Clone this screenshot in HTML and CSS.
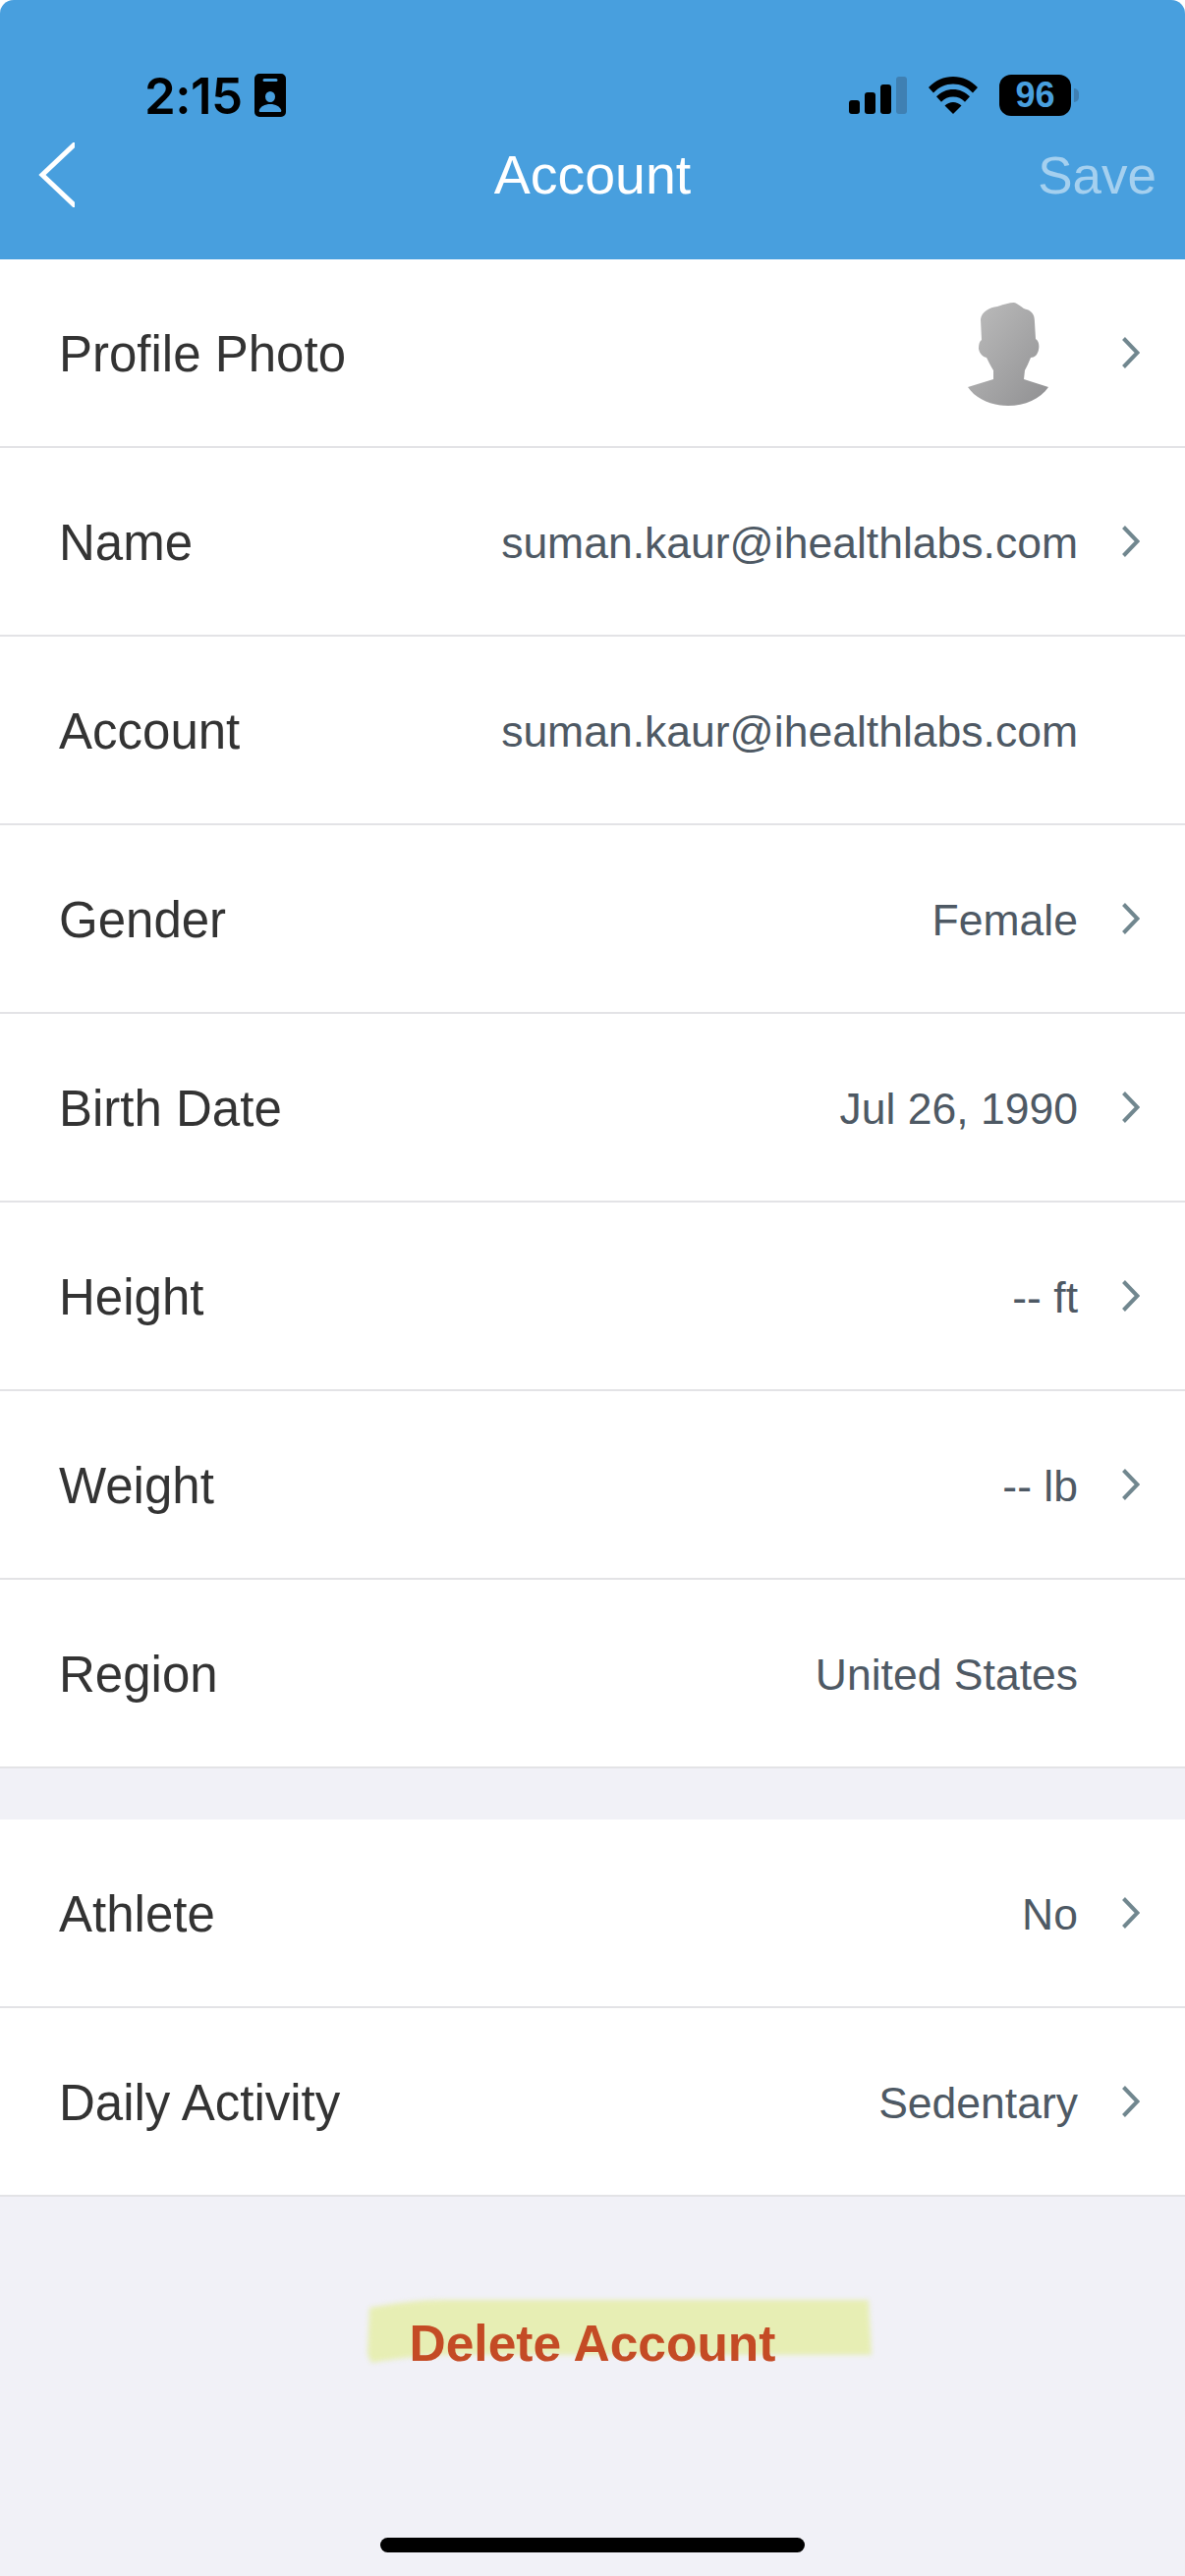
FILE: index.html
```html
<!DOCTYPE html>
<html lang="en">
<head>
    <meta charset="UTF-8">
    <meta name="viewport" content="width=device-width, initial-scale=1.0">
    <title>Account</title>
    <link rel="stylesheet" href="styles.css">
</head>
<body>
    <div class="screen">
        <div class="header">
            <div class="statusbar">
                <div class="time-group">
                    <span class="time">2:15</span>
                    <svg class="badge" viewBox="0 0 32 44"><path fill-rule="evenodd" d="M5 0h22a5 5 0 0 1 5 5v34a5 5 0 0 1-5 5H5a5 5 0 0 1-5-5V5a5 5 0 0 1 5-5zM10 5a1 1 0 0 0 0 3h12a1 1 0 0 0 0-3zM16 18a5 5.500 0 1 0 0 11 5 5.500 0 0 0 0-11zM6 39h20c1 0 1.500-.8 1.200-1.800C26 33.500 21.500 31 16 31S6 33.500 4.800 37.200C4.500 38.200 5 39 6 39z"/></svg>
                </div>
                <div class="status-icons">
                    <svg class="signal" viewBox="0 0 59 38">
                        <rect x="0" y="24" width="11" height="14" rx="3"/>
                        <rect x="16" y="16" width="11" height="22" rx="3"/>
                        <rect x="32" y="8" width="11" height="30" rx="3"/>
                        <rect x="48" y="0" width="11" height="38" rx="3" fill="#3f80b3"/>
                    </svg>
                    <svg class="wifi" viewBox="0 0 50 38">
                        <path d="M25 0C15.500 0 7 3.800 0 11l5 5.500C10.500 10.500 17.500 7.500 25 7.500s14.500 3 20 9l5-5.500C43 3.800 34.500 0 25 0z"/>
                        <path d="M25 13c-6.500 0-12.500 2.600-17 7.300l5 5.500c3-3.400 7.300-5.300 12-5.300s9 1.900 12 5.300l5-5.500C37.500 15.600 31.500 13 25 13z"/>
                        <path d="M25 26c-3.200 0-6 1.200-8.500 3.500L25 38l8.500-8.500C31 27.200 28.200 26 25 26z"/>
                    </svg>
                    <div class="battery">
                        <span class="battery-level">96</span>
                        <span class="battery-tip"></span>
                    </div>
                </div>
            </div>
            <div class="nav">
                <svg class="back" viewBox="0 0 38 66"><polyline points="42,-2 5,33 42,68" fill="none" stroke="#fff" stroke-width="5"/></svg>
                <span class="nav-title">Account</span>
                <span class="nav-save">Save</span>
            </div>
        </div>

        <div class="group">
            <div class="row">
                <span class="label">Profile Photo</span>
                <svg class="avatar" viewBox="0 0 82 105">
                    <defs>
                        <linearGradient id="avatarFill" x1="0" y1="0" x2="1" y2="1">
                            <stop offset="0" stop-color="#bdbdbd"/>
                            <stop offset="1" stop-color="#909092"/>
                        </linearGradient>
                    </defs>
                    <path fill="url(#avatarFill)" d="M13 17C14 9 22 5 30 4C36 2 42 0 47 0C52 1 55 6 60 7C66 9 68 13 68 20L69 37C72 39 73 43 72 48C71 53 68 56 64 56C62 61 60 65 58 69L57 78L82 86C74 98 58 105 41 105C24 105 8 98 0 86L26 78L26 69C23 64 21 60 19 56C15 55 12 52 11 47C11 42 12 39 14 38Z"/>
                </svg>
                <svg class="chevron" viewBox="0 0 18 32"><polyline points="1.500,1.500 15.500,16 1.500,30.500" fill="none" stroke="#71878f" stroke-width="4"/></svg>
            </div>
            <div class="row">
                <span class="label">Name</span>
                <span class="value">suman.kaur@ihealthlabs.com</span>
                <svg class="chevron" viewBox="0 0 18 32"><polyline points="1.500,1.500 15.500,16 1.500,30.500" fill="none" stroke="#71878f" stroke-width="4"/></svg>
            </div>
            <div class="row no-arrow">
                <span class="label">Account</span>
                <span class="value">suman.kaur@ihealthlabs.com</span>
            </div>
            <div class="row">
                <span class="label">Gender</span>
                <span class="value">Female</span>
                <svg class="chevron" viewBox="0 0 18 32"><polyline points="1.500,1.500 15.500,16 1.500,30.500" fill="none" stroke="#71878f" stroke-width="4"/></svg>
            </div>
            <div class="row">
                <span class="label">Birth Date</span>
                <span class="value">Jul 26, 1990</span>
                <svg class="chevron" viewBox="0 0 18 32"><polyline points="1.500,1.500 15.500,16 1.500,30.500" fill="none" stroke="#71878f" stroke-width="4"/></svg>
            </div>
            <div class="row">
                <span class="label">Height</span>
                <span class="value">-- ft</span>
                <svg class="chevron" viewBox="0 0 18 32"><polyline points="1.500,1.500 15.500,16 1.500,30.500" fill="none" stroke="#71878f" stroke-width="4"/></svg>
            </div>
            <div class="row">
                <span class="label">Weight</span>
                <span class="value">-- lb</span>
                <svg class="chevron" viewBox="0 0 18 32"><polyline points="1.500,1.500 15.500,16 1.500,30.500" fill="none" stroke="#71878f" stroke-width="4"/></svg>
            </div>
            <div class="row no-arrow">
                <span class="label">Region</span>
                <span class="value">United States</span>
            </div>
        </div>

        <div class="group second">
            <div class="row">
                <span class="label">Athlete</span>
                <span class="value">No</span>
                <svg class="chevron" viewBox="0 0 18 32"><polyline points="1.500,1.500 15.500,16 1.500,30.500" fill="none" stroke="#71878f" stroke-width="4"/></svg>
            </div>
            <div class="row">
                <span class="label">Daily Activity</span>
                <span class="value">Sedentary</span>
                <svg class="chevron" viewBox="0 0 18 32"><polyline points="1.500,1.500 15.500,16 1.500,30.500" fill="none" stroke="#71878f" stroke-width="4"/></svg>
            </div>
        </div>

        <div class="footer">
            <div class="delete">
                <svg class="marker" viewBox="0 0 515 64" preserveAspectRatio="none"><path d="M4 8C30 3 55 0 80 0L512 0L515 56L80 56C50 57 30 60 6 64L2 55Z"/></svg>
                <span class="delete-text">Delete Account</span>
            </div>
            <div class="home-indicator"></div>
        </div>
    </div>
</body>
</html>
```

FILE: styles.css
```css
html, body {
    margin: 0;
    padding: 0;
    background-color: #fff;
}

.screen {
    width: 1206px;
    height: 2622px;
    display: flex;
    flex-direction: column;
    font-family: "Liberation Sans", Arial, sans-serif;
    background-color: #f1f1f7;
    border-radius: 14px 14px 0 0;
    overflow: hidden;
}

.header {
    height: 264px;
    background-color: #489fde;
}

.statusbar {
    height: 44px;
    padding: 75px 108px 0 147px;
    display: flex;
    justify-content: space-between;
    align-items: center;
}

.time-group {
    display: flex;
    align-items: center;
    gap: 12px;
}

.time {
    font-family: Inter, sans-serif;
    font-weight: 600;
    font-size: 51px;
    letter-spacing: -0.5px;
    color: #000;
}

.badge {
    width: 32px;
    height: 44px;
}

.status-icons {
    display: flex;
    align-items: center;
    gap: 22px;
}

.signal {
    width: 59px;
    height: 38px;
}

.wifi {
    width: 50px;
    height: 38px;
}

.battery {
    display: flex;
    align-items: center;
    gap: 3px;
}

.battery-level {
    width: 73px;
    height: 42px;
    background-color: #000;
    border-radius: 12px;
    color: #489fde;
    font-size: 36px;
    font-weight: bold;
    line-height: 42px;
    text-align: center;
}

.battery-tip {
    width: 5px;
    height: 14px;
    background-color: #3f80b3;
    border-radius: 0 5px 5px 0;
}

.nav {
    display: flex;
    align-items: center;
    justify-content: space-between;
    padding: 0 29px 0 38px;
    margin-top: 26px;
    height: 66px;
    position: relative;
}

.back {
    width: 38px;
    height: 66px;
}

.nav-title {
    position: absolute;
    left: 0;
    right: 0;
    text-align: center;
    font-size: 55.500px;
    color: #fff;
}

.nav-save {
    font-size: 53px;
    color: #a5d0ef;
}

.group {
    background-color: #fff;
}

.group.second {
    margin-top: 52px;
}

.row {
    height: 192px;
    box-sizing: border-box;
    display: flex;
    align-items: center;
    padding: 3px 46px 0 60px;
    border-bottom: 2px solid #e3e3e6;
}

.row.no-arrow {
    padding-right: 111px;
}

.label {
    flex: 1;
    font-size: 51px;
    color: #333;
}

.value {
    font-size: 44.500px;
    color: #4e5964;
    margin-right: -2px;
}

.avatar {
    width: 82px;
    height: 105px;
}

.chevron {
    width: 18px;
    height: 32px;
    margin-top: -3px;
    margin-left: 47px;
}

.row .avatar + .chevron {
    margin-left: 75px;
}

.footer {
    flex: 1;
    display: flex;
    flex-direction: column;
    align-items: center;
    position: relative;
}

.delete {
    margin-top: 105px;
    width: 515px;
    height: 64px;
    position: relative;
    display: flex;
    align-items: center;
    justify-content: center;
}

.marker {
    position: absolute;
    left: 26px;
    top: 0;
    width: 515px;
    height: 64px;
    fill: #e7eeb4;
    filter: blur(2.5px);
}

.delete-text {
    position: relative;
    top: 12px;
    font-size: 51.500px;
    font-weight: bold;
    color: #c44b25;
}

.home-indicator {
    position: absolute;
    left: 387px;
    bottom: 24px;
    width: 432px;
    height: 15px;
    border-radius: 8px;
    background-color: #000;
}
```
